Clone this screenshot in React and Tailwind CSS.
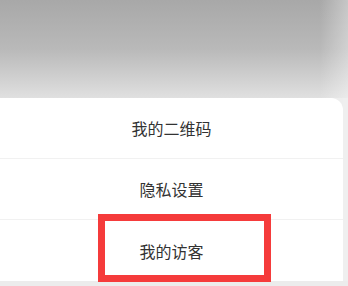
export default function App() {
  const items = ["我的二维码", "隐私设置", "我的访客"];
  return (
    <div
      className="relative w-[348px] h-[286px] overflow-hidden bg-[#eeeeee]"
      style={{ fontFamily: '"Noto Sans CJK SC", "Noto Sans", sans-serif' }}
    >
      <div className="h-[98px] flex justify-end bg-gradient-to-b from-[#a8a8a8] via-[#b9b9b9] to-[#e0e0e0]">
        <div className="w-[28px] h-full bg-gradient-to-r from-transparent to-white/35" />
      </div>
      <div className="flex">
        <div className="w-[343px] bg-white rounded-tr-[12px] flex flex-col">
          <div className="h-[61px] flex items-center justify-center text-[16px] text-[#333333] border-b border-[#f1f1f1]">
            {items[0]}
          </div>
          <div className="h-[61px] flex items-center justify-center text-[16px] text-[#333333] border-b border-[#f1f1f1]">
            {items[1]}
          </div>
          <div className="h-[61px] flex items-center justify-center text-[16px] text-[#333333]">
            {items[2]}
          </div>
        </div>
        <div className="flex-1 bg-[#efefef]" />
      </div>
      <div className="h-[6px] bg-[#ececec]" />
      <div className="absolute left-[98px] top-[214px] w-[173px] h-[68px] border-[7px] border-[#f53b3b]" />
    </div>
  );
}
